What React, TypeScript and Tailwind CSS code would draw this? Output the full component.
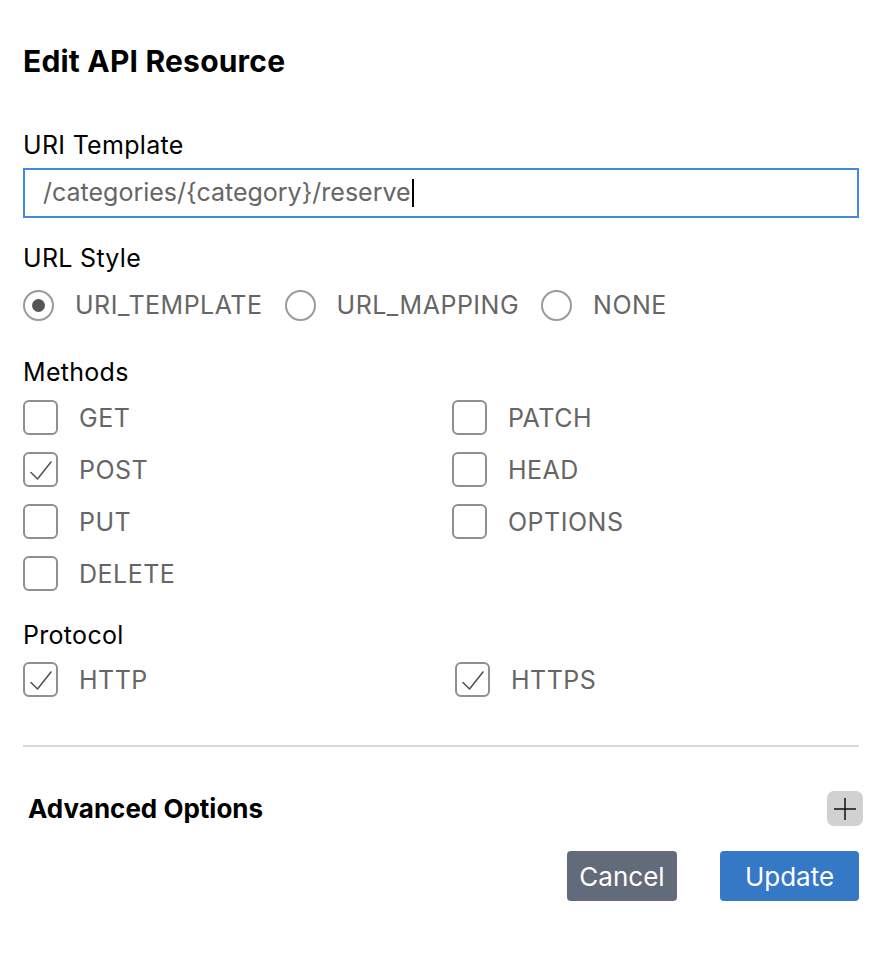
import React from "react";

const font = { fontFamily: "Inter, 'Noto Sans', sans-serif" };

const Check: React.FC<{ checked?: boolean }> = ({ checked }) => (
    <span className="flex h-[35px] w-[35px] shrink-0 items-center justify-center rounded-[6px] border-2 border-[#8f8f8f] bg-white">
        {checked && (
            <svg width="26" height="26" viewBox="0 0 26 26" fill="none">
                <path d="M3 15.5 L9.5 22 L23 5" stroke="#555" strokeWidth="1.6" strokeLinecap="round" strokeLinejoin="round" />
            </svg>
        )}
    </span>
);

const CheckItem: React.FC<{ label: string; checked?: boolean }> = ({ label, checked }) => (
    <label className="flex h-[35px] items-center gap-[21px]">
        <Check checked={checked} />
        <span className="text-[25px] leading-[30px] tracking-[0.5px] text-[#666666]">{label}</span>
    </label>
);

const Radio: React.FC<{ label: string; checked?: boolean }> = ({ label, checked }) => (
    <label className="flex h-[34px] items-center gap-[21px]">
        <span className="flex h-[31px] w-[31px] items-center justify-center rounded-full border-2 border-[#9a9a9a]">
            {checked && <span className="h-[13px] w-[13px] rounded-full bg-[#555555]" />}
        </span>
        <span className="text-[25px] leading-[30px] tracking-[0.5px] text-[#666666]">{label}</span>
    </label>
);

const Label: React.FC<{ text: string; className?: string }> = ({ text, className }) => (
    <div className={`text-[25px] leading-[30px] tracking-[0.3px] text-black ${className ?? ""}`}>{text}</div>
);

const App: React.FC = () => {
    return (
        <div className="min-h-screen bg-white" style={font}>
            <div className="ml-[23px] w-[836px] pt-[43px] pb-10">
                <h2 className="text-[30px] leading-[36px] font-bold tracking-[0.2px] text-black">Edit API Resource</h2>

                <Label text="URI Template" className="mt-[51px]" />
                <div className="mt-[8px] flex h-[50px] items-center border-2 border-[#4189e0] pl-[18px]">
                    <span className="text-[25px] text-[#666666]">/categories/{"{category}"}/reserve</span>
                    <span className="ml-[1px] h-[28px] w-[2px] bg-black" />
                </div>

                <Label text="URL Style" className="mt-[25px]" />
                <div className="mt-[15px] flex items-center gap-[22px]">
                    <Radio label="URI_TEMPLATE" checked />
                    <Radio label="URL_MAPPING" />
                    <Radio label="NONE" />
                </div>

                <Label text="Methods" className="mt-[35px]" />
                <div className="mt-[13px] grid grid-cols-[429px_1fr] gap-y-[17px]">
                    <CheckItem label="GET" />
                    <CheckItem label="PATCH" />
                    <CheckItem label="POST" checked />
                    <CheckItem label="HEAD" />
                    <CheckItem label="PUT" />
                    <CheckItem label="OPTIONS" />
                    <CheckItem label="DELETE" />
                </div>

                <Label text="Protocol" className="mt-[29px]" />
                <div className="mt-[12px] grid grid-cols-[432px_1fr]">
                    <CheckItem label="HTTP" checked />
                    <CheckItem label="HTTPS" checked />
                </div>

                <div className="mt-[48px] h-[2px] bg-[#d9d9d9]" />

                <div className="mt-[44px] flex h-[35px] items-center justify-between">
                    <span className="ml-[5px] text-[26px] leading-[35px] font-bold text-black">Advanced Options</span>
                    <button className="mr-[-4px] flex h-[35px] w-[36px] items-center justify-center rounded-[7px] bg-[#d1d1d1]">
                        <svg width="24" height="24" viewBox="0 0 24 24" fill="none">
                            <path d="M12 1 V23 M1 12 H23" stroke="#111" strokeWidth="1.5" />
                        </svg>
                    </button>
                </div>

                <div className="mt-[25px] flex justify-end gap-[43px]">
                    <button className="h-[50px] w-[110px] rounded-[4px] bg-[#626b79] text-[26px] text-white">Cancel</button>
                    <button className="h-[50px] w-[139px] rounded-[4px] bg-[#3578c6] text-[26px] text-white">Update</button>
                </div>
            </div>
        </div>
    );
};

export default App;
